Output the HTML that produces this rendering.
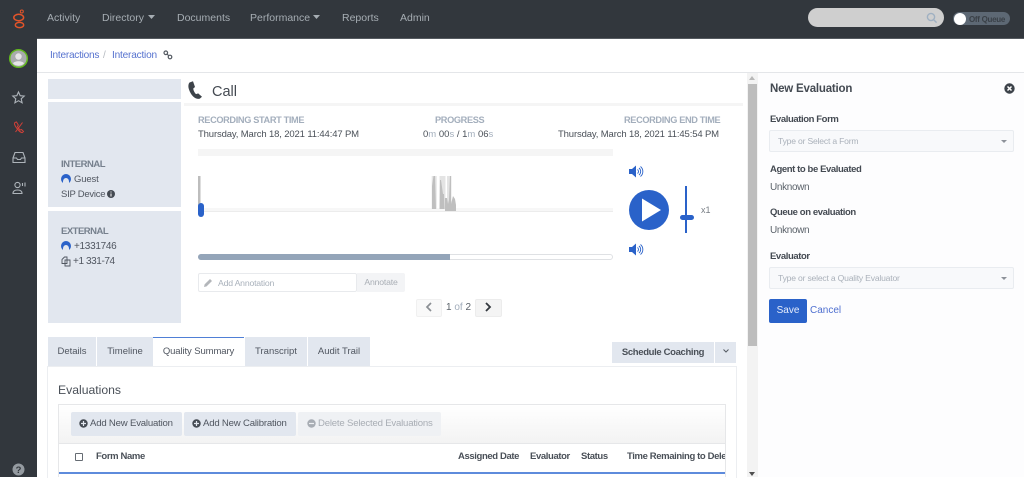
<!DOCTYPE html>
<html><head><meta charset="utf-8"><style>
html,body{margin:0;padding:0;width:1024px;height:477px;overflow:hidden;background:#fff;font-family:"Liberation Sans",sans-serif;color:#444a52}
div{position:absolute;white-space:nowrap}
svg{position:absolute;overflow:visible}
.nav{top:11px;font-size:10.5px;color:#a6adb3;line-height:14px}
.pnl{background:#e2e7ef;left:48px;width:133px}
.h{font-weight:bold;font-size:9.5px;color:#76808d;line-height:12px;letter-spacing:-.5px}
.t{font-size:9.5px;color:#505660;line-height:12px;letter-spacing:-.14px}
.g{font-weight:bold;font-size:9.2px;color:#a3aebc;line-height:12px;letter-spacing:-.35px}
.lab{left:770px;font-weight:bold;font-size:9.5px;color:#444a52;line-height:12px;letter-spacing:-.4px}
.val{left:770px;font-size:10px;color:#5c636b;line-height:12px;letter-spacing:-.35px}
.sel{left:769px;width:243px;height:20px;background:#f8f9fb;border:1px solid #e9ecf0;border-radius:2px;font-size:8.6px;color:#aab1ba;line-height:20px;text-indent:8px;letter-spacing:-.2px}
.tab{top:337px;height:29px;background:#e2e7ef;font-size:9.5px;color:#505660;line-height:29px;text-align:center}
.btn{top:412px;height:24px;background:#e2e7ef;border-radius:2px;font-size:9.6px;color:#505660;line-height:24px;letter-spacing:-.2px}
.th{top:451px;font-weight:bold;font-size:9.5px;color:#4a5058;line-height:12px;letter-spacing:-.38px}
</style></head><body>
<!-- top bar -->
<div style="left:0;top:0;width:1024px;height:39px;background:#32373d"></div>
<div style="left:37px;top:38px;width:987px;height:1px;background:#555a60"></div>
<div style="left:0;top:39px;width:37px;height:438px;background:#32373d"></div>
<svg style="left:0;top:0" width="37" height="39" fill="none" stroke="#e2542a" stroke-width="1.5">
<circle cx="21.8" cy="11.5" r="1.5" stroke-width="1"/><ellipse cx="18.7" cy="17.5" rx="4.9" ry="3.2"/><ellipse cx="19.5" cy="25" rx="4.2" ry="2.6"/></svg>
<div class="nav" style="left:47px">Activity</div>
<div class="nav" style="left:102px">Directory</div>
<svg style="left:148px;top:15px" width="8" height="5"><path d="M0 0h7L3.500 4z" fill="#a6adb3"/></svg>
<div class="nav" style="left:177px">Documents</div>
<div class="nav" style="left:250px">Performance</div>
<svg style="left:313px;top:15px" width="8" height="5"><path d="M0 0h7L3.500 4z" fill="#a6adb3"/></svg>
<div class="nav" style="left:342px">Reports</div>
<div class="nav" style="left:400px">Admin</div>
<div style="left:808px;top:8px;width:136px;height:19px;background:#cfcfcf;border-radius:10px"></div>
<svg style="left:926px;top:12px" width="12" height="12" fill="none" stroke="#9fb0c2" stroke-width="1.400"><circle cx="5" cy="5" r="3.600"/><path d="M7.600 7.600l3 3"/></svg>
<div style="left:953px;top:12px;width:57px;height:13px;background:#5d6874;border-radius:7px"></div>
<div style="left:954px;top:13px;width:12px;height:12px;background:#fff;border-radius:50%"></div>
<div style="left:969px;top:12.5px;font-size:8px;font-weight:bold;color:#3a4047;line-height:13px;letter-spacing:-.3px">Off Queue</div>
<!-- sidebar icons -->
<svg style="left:8px;top:48px" width="22" height="22"><circle cx="10.500" cy="10.500" r="8.800" fill="#a9abad" stroke="#62b81e" stroke-width="1.500"/><circle cx="10.500" cy="8.500" r="3.200" fill="#e6e6e6"/><path d="M5 15.500c1-3 10-3 11 0a8 8 0 0 1-11 0z" fill="#e6e6e6"/></svg>
<svg style="left:12px;top:91px" width="13" height="13" fill="none" stroke="#aeb4ba" stroke-width="1.100"><path d="M6.500 1l1.700 3.700 4 .4-3 2.700.9 4-3.600-2.100-3.600 2.100.9-4-3-2.700 4-.4z"/></svg>
<svg style="left:13px;top:121px" width="12" height="13" fill="none" stroke="#cf4038" stroke-width="1"><path d="M2 1.500c-1 .8-.5 3 2 6s4 4.500 5.500 4l1-1-2-2-1.500.5-2.500-3.300.8-1.700L3.500 1z"/><path d="M9.500 1.500L2.500 11"/></svg>
<svg style="left:12px;top:151px" width="14" height="13" fill="none" stroke="#aeb4ba" stroke-width="1.100"><path d="M1 7l2-5.500h8L13 7v4.500H1zM1 7h3.500l1 1.500h3l1-1.500H13"/></svg>
<svg style="left:12px;top:181px" width="14" height="14" fill="none" stroke="#aeb4ba" stroke-width="1.100"><circle cx="5.500" cy="4" r="2.600"/><path d="M1 12.500c0-2.500 1.500-3.500 4.500-3.500s4.500 1 4.500 3.500z"/><path d="M10.500 2v3M13 1.500v4"/></svg>
<svg style="left:12px;top:463px" width="13" height="13"><circle cx="6.500" cy="6.500" r="6" fill="#949aa0"/><text x="6.500" y="10" font-size="9.500" font-weight="bold" text-anchor="middle" fill="#32373d" font-family="Liberation Sans">?</text></svg>
<!-- breadcrumb -->
<div style="left:37px;top:72px;width:987px;height:1px;background:#e4e6e9"></div>
<div style="left:50px;top:49px;font-size:10.100px;color:#5672cf;line-height:14px;letter-spacing:-.25px">Interactions</div>
<div style="left:103px;top:49px;font-size:10px;color:#b5bac0;line-height:14px">/</div>
<div style="left:112px;top:49px;font-size:10.100px;color:#5672cf;line-height:14px;letter-spacing:-.2px">Interaction</div>
<svg style="left:163px;top:50px" width="10" height="10" fill="none" stroke="#555b63" stroke-width="1.200"><circle cx="2.800" cy="2.800" r="1.800"/><circle cx="7" cy="7" r="1.800"/><path d="M4 4l2 2"/></svg>
<!-- left panels -->
<div class="pnl" style="top:79px;height:20px"></div>
<div class="pnl" style="top:102px;height:105px"></div>
<div class="pnl" style="top:211px;height:112px"></div>
<div class="h" style="left:61px;top:159px">INTERNAL</div>
<svg style="left:61px;top:174px" width="10" height="10"><circle cx="5" cy="5" r="5" fill="#2a62c9"/><path d="M2 10V7.500a3 3.500 0 0 1 6 0V10z" fill="#e2e7ef"/></svg>
<div class="t" style="left:74px;top:174px">Guest</div>
<div class="t" style="left:61px;top:189px;letter-spacing:-.25px">SIP Device</div>
<svg style="left:107px;top:190px" width="9" height="9"><circle cx="4" cy="4" r="4" fill="#444a52"/><path d="M3.500 1.500h1v1h-1zM3.500 3.500h1v3h-1z" fill="#fff"/></svg>
<div class="h" style="left:61px;top:226px">EXTERNAL</div>
<svg style="left:61px;top:241px" width="10" height="10"><circle cx="5" cy="5" r="5" fill="#2a62c9"/><path d="M2 10V7.500a3 3.500 0 0 1 6 0V10z" fill="#e2e7ef"/></svg>
<div class="t" style="left:74px;top:241px;font-size:10px;letter-spacing:-.3px">+1331746</div>
<svg style="left:61px;top:256px" width="10" height="11" fill="none" stroke="#505660" stroke-width=".9"><path d="M1 3.500L3.500 1H6v6.500H1zM4 4h5v6H4z"/></svg>
<div class="t" style="left:73px;top:256px;font-size:10px;letter-spacing:-.4px">+1 331-74</div>
<!-- call header -->
<svg style="left:188px;top:81px" width="15" height="18"><path d="M1.500 1.500L5 .3 7 6 5.200 7.600c.4 2.200 1.300 4 2.800 5.500l2.200-.7 3.800 3.400-2.300 2C7 18.500 3 14.500 1 8.500 0 5.500.3 3 1.500 1.500z" fill="#3d434a"/></svg>
<div style="left:212px;top:83px;font-size:14.500px;color:#444a52;line-height:18px">Call</div>
<div style="left:184px;top:103px;width:559px;height:3px;background:#f5f5f5"></div>
<div class="g" style="left:198px;top:114px">RECORDING START TIME</div>
<div class="t" style="left:198px;top:129px;color:#4a5058">Thursday, March 18, 2021 11:44:47 PM</div>
<div class="g" style="left:435px;top:114px">PROGRESS</div>
<div class="t" style="left:423px;top:129px;color:#4a5058;letter-spacing:0">0<span style="color:#a3aebc">m</span> 00<span style="color:#a3aebc">s</span> / 1<span style="color:#a3aebc">m</span> 06<span style="color:#a3aebc">s</span></div>
<div class="g" style="left:624px;top:114px">RECORDING END TIME</div>
<div class="t" style="left:558px;top:129px;color:#4a5058">Thursday, March 18, 2021 11:45:54 PM</div>
<!-- waveform -->
<div style="left:198px;top:149px;width:415px;height:7px;background:#f5f5f5"></div>
<div style="left:198px;top:208px;width:415px;height:3px;background:#f7f7f7;border-bottom:1px solid #ececec"></div>
<svg style="left:198px;top:176px" width="270" height="34"><path d="M0 0h2.500v33H0z" fill="#bdbdbd"/><path d="M204-0" fill="none"/>
<path d="M233.700 0h5v33h-5zM241.500 0h6v33h-6zM249 0h4.500v33h-4.500z" fill="#e4e4e4"/>
<path d="M234 10l1.500-10h1.500l1 33h-4zM242 4l1 0 2 14 1 0 .5 15h-5zM247 22l2 0 1 6 1-4 1-24 1 0 0 28 2-8 2 3 1 6 0 6h-11z" fill="#bfbfbf"/></svg>
<div style="left:198px;top:203px;width:6px;height:14px;background:#2a62c9;border-radius:3px"></div>
<!-- progress -->
<div style="left:198px;top:254px;width:413px;height:4px;border:1px solid #dfe1e4;border-radius:3px;background:#fff"></div>
<div style="left:198px;top:254px;width:252px;height:6px;background:#94a5b9;border-radius:3px 0 0 3px"></div>
<!-- annotation -->
<div style="left:198px;top:273px;width:157px;height:17px;background:#fff;border:1px solid #e8eaed;border-radius:2px"></div>
<svg style="left:204px;top:278px" width="9" height="9"><path d="M0 9l.6-2.600L6 1l2 2-5.400 5.400z" fill="#b3b6ba"/></svg>
<div style="left:218px;top:276.500px;font-size:8.700px;color:#a9b1bb;line-height:12px;letter-spacing:-.2px">Add Annotation</div>
<div style="left:357px;top:273px;width:48px;height:19px;background:#f3f4f6;border-radius:0 2px 2px 0;font-size:8.700px;color:#a9aeb5;line-height:19px;text-align:center;letter-spacing:-.2px">Annotate</div>
<!-- pager -->
<div style="left:416px;top:299px;width:24px;height:16px;background:#f9f9f9;border:1px solid #f0f0f0;border-radius:2px"></div>
<svg style="left:425px;top:302px" width="8" height="10" fill="none" stroke="#8b8f94" stroke-width="1.700"><path d="M6 1L2 5l4 4"/></svg>
<div style="left:446px;top:302px;font-size:10px;color:#5c636b;line-height:12px">1 <span style="color:#a3aebc">of</span> 2</div>
<div style="left:475px;top:299px;width:25px;height:16px;background:#f4f4f4;border:1px solid #ececec;border-radius:2px"></div>
<svg style="left:484px;top:302px" width="8" height="10" fill="none" stroke="#33383e" stroke-width="1.800"><path d="M2 1l4 4-4 4"/></svg>
<!-- player -->
<svg style="left:629px;top:165px" width="16" height="13" fill="#2a62c9"><path d="M0 4h3l4-3.500v12L3 9H0z"/><g fill="none" stroke="#2a62c9" stroke-width=".9"><path d="M8.500 4.500a2.500 2.500 0 0 1 0 4M10 3a4.500 4.500 0 0 1 0 7M11.500 1.500a6.500 6.500 0 0 1 0 10"/></g></svg>
<svg style="left:629px;top:243px" width="16" height="13" fill="#2a62c9"><path d="M0 4h3l4-3.500v12L3 9H0z"/><g fill="none" stroke="#2a62c9" stroke-width=".9"><path d="M8.500 4.500a2.500 2.500 0 0 1 0 4M10 3a4.500 4.500 0 0 1 0 7M11.500 1.500a6.500 6.500 0 0 1 0 10"/></g></svg>
<svg style="left:629px;top:190px" width="41" height="40"><circle cx="20" cy="20" r="20" fill="#2a62c9"/><path d="M13 8.500L32 20 13 31.500z" fill="#fff"/></svg>
<div style="left:685px;top:186px;width:2px;height:47px;background:#2a62c9"></div>
<div style="left:680px;top:215px;width:14px;height:5px;background:#2a62c9;border-radius:3px"></div>
<div style="left:701px;top:204px;font-size:9px;color:#777d84;line-height:12px">x1</div>
<!-- scrollbar -->
<div style="left:747px;top:73px;width:11px;height:404px;background:#f3f3f3"></div>
<div style="left:748px;top:84px;width:9px;height:262px;background:#bdbdbd"></div>
<svg style="left:749px;top:76px" width="7" height="5"><path d="M0 4h6L3 0z" fill="#b8b8b8"/></svg>
<svg style="left:749px;top:472px" width="7" height="5"><path d="M0 0h6L3 4z" fill="#505050"/></svg>
<!-- right panel -->
<div style="left:758px;top:73px;width:266px;height:404px;background:#fdfdfe"></div>
<div style="left:770px;top:82px;font-weight:bold;font-size:11.500px;color:#444a52;line-height:14px;letter-spacing:-.2px">New Evaluation</div>
<svg style="left:1004px;top:83px" width="11" height="11"><circle cx="5.500" cy="5.500" r="5.200" fill="#3d434a"/><path d="M3.500 3.500l4 4M7.500 3.500l-4 4" stroke="#fff" stroke-width="1.500"/></svg>
<div class="lab" style="top:114px">Evaluation Form</div>
<div class="sel" style="top:130px">Type or Select a Form</div>
<svg style="left:1001px;top:140px" width="7" height="4"><path d="M0 0h6L3 3z" fill="#8c9199"/></svg>
<div class="lab" style="top:164px">Agent to be Evaluated</div>
<div class="val" style="top:182px">Unknown</div>
<div class="lab" style="top:207px">Queue on evaluation</div>
<div class="val" style="top:225px">Unknown</div>
<div class="lab" style="top:251px">Evaluator</div>
<div class="sel" style="top:267px">Type or select a Quality Evaluator</div>
<svg style="left:1001px;top:277px" width="7" height="4"><path d="M0 0h6L3 3z" fill="#8c9199"/></svg>
<div style="left:769px;top:299px;width:38px;height:24px;background:#2a62c9;border-radius:2px;color:#e8eefb;font-size:10px;line-height:24px;text-align:center">Save</div>
<div style="left:810px;top:304px;font-size:10px;color:#4f70d0;line-height:14px">Cancel</div>
<!-- tabs -->
<div class="tab" style="left:48px;width:48px">Details</div>
<div class="tab" style="left:97px;width:56px">Timeline</div>
<div class="tab" style="left:153px;width:91px;background:#fff;border-top:1px solid #4f7fd6;box-sizing:border-box;line-height:27px;letter-spacing:-.1px">Quality Summary</div>
<div class="tab" style="left:245px;width:62px">Transcript</div>
<div class="tab" style="left:308px;width:62px">Audit Trail</div>
<div style="left:612px;top:342px;width:102px;height:21px;background:#e2e7ef;font-weight:bold;font-size:9.500px;color:#4a5058;line-height:21px;text-align:center;letter-spacing:-.35px">Schedule Coaching</div>
<div style="left:715px;top:342px;width:21px;height:21px;background:#e2e7ef"></div>
<svg style="left:723px;top:349px" width="6" height="4" fill="none" stroke="#555b63"><path d="M.5.500L3 3 5.500.500"/></svg>
<!-- content box -->
<div style="left:47px;top:366px;width:688px;height:111px;border:1px solid #eceef1;border-bottom:0;background:#fff"></div>
<div style="left:58px;top:383px;font-size:12.200px;color:#4a5058;line-height:15px">Evaluations</div>
<div style="left:58px;top:404px;width:668px;height:73px;border:1px solid #e6e7e9;border-bottom:0;box-sizing:border-box;overflow:hidden">
<div style="left:0;top:0;width:667px;height:38px;background:linear-gradient(#fff,#f3f3f3);border-bottom:1px solid #e6e7e9"></div>
<div style="left:0;top:67px;width:667px;height:2px;background:#5e8bdc"></div>
</div>
<div class="btn" style="left:71px;width:111px;text-indent:19px">Add New Evaluation</div>
<div class="btn" style="left:184px;width:112px;text-indent:19px">Add New Calibration</div>
<div class="btn" style="left:298px;width:143px;background:#eff1f4;color:#a8adb4;text-indent:20px">Delete Selected Evaluations</div>
<svg style="left:79px;top:419px" width="9" height="9"><circle cx="4.500" cy="4.500" r="4.200" fill="#444a52"/><path d="M2 4.500h5M4.500 2v5" stroke="#e2e7ef" stroke-width="1.200"/></svg>
<svg style="left:192px;top:419px" width="9" height="9"><circle cx="4.500" cy="4.500" r="4.200" fill="#444a52"/><path d="M2 4.500h5M4.500 2v5" stroke="#e2e7ef" stroke-width="1.200"/></svg>
<svg style="left:307px;top:419px" width="9" height="9"><circle cx="4.500" cy="4.500" r="4.200" fill="#a8adb4"/><path d="M2 4.500h5" stroke="#eff1f4" stroke-width="1.200"/></svg>
<div style="left:75px;top:453px;width:6px;height:6px;border:1px solid #666c73;border-radius:1px"></div>
<div class="th" style="left:96px">Form Name</div>
<div class="th" style="left:458px">Assigned Date</div>
<div class="th" style="left:530px">Evaluator</div>
<div class="th" style="left:581px">Status</div>
<div class="th" style="left:627px;width:98px;overflow:hidden">Time Remaining to Delete</div>
</body></html>
